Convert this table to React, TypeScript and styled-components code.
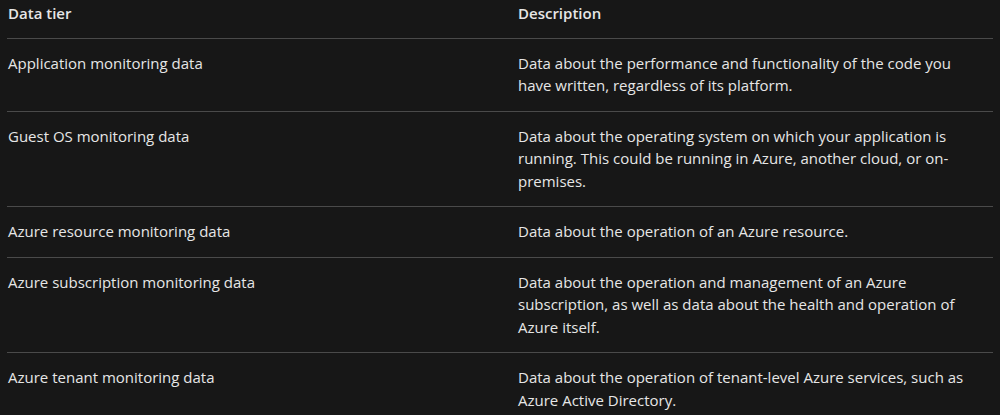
import styled, { createGlobalStyle } from 'styled-components';

const GlobalStyle = createGlobalStyle`
  html, body {
    margin: 0;
    background: #171717;
  }
`;

interface Tier {
  name: string;
  description: string;
}

const tiers: Tier[] = [
  {
    name: 'Application monitoring data',
    description: 'Data about the performance and functionality of the code you have written, regardless of its platform.',
  },
  {
    name: 'Guest OS monitoring data',
    description: 'Data about the operating system on which your application is running. This could be running in Azure, another cloud, or on-premises.',
  },
  {
    name: 'Azure resource monitoring data',
    description: 'Data about the operation of an Azure resource.',
  },
  {
    name: 'Azure subscription monitoring data',
    description: 'Data about the operation and management of an Azure subscription, as well as data about the health and operation of Azure itself.',
  },
  {
    name: 'Azure tenant monitoring data',
    description: 'Data about the operation of tenant-level Azure services, such as Azure Active Directory.',
  },
];

export default function App() {
  return (
    <Page>
      <GlobalStyle />
      <Table>
        <thead>
          <tr>
            <HeadCell>Data tier</HeadCell>
            <HeadCell>Description</HeadCell>
          </tr>
        </thead>
        <tbody>
          {tiers.map((tier) => (
            <Row key={tier.name}>
              <Cell>{tier.name}</Cell>
              <Cell>{tier.description}</Cell>
            </Row>
          ))}
        </tbody>
      </Table>
    </Page>
  );
}

const Page = styled.div`
  width: 1000px;
  height: 415px;
  overflow: hidden;
  background: #171717;
  padding: 0 7px;
  box-sizing: border-box;
  font-family: 'Segoe UI', 'Open Sans', sans-serif;
  font-size: 15px;
  line-height: 22.5px;
  color: #e6e6e6;
`;

const Table = styled.table`
  width: 986px;
  border-collapse: collapse;
  table-layout: fixed;
`;

const HeadCell = styled.th`
  text-align: left;
  font-weight: 600;
  padding: 2px 16px 13px 0;
  border-bottom: 1px solid #4a4a4a;
  &:first-child {
    width: 494px;
    padding-left: 1px;
  }
`;

const Row = styled.tr`
  border-bottom: 1px solid #4a4a4a;
`;

const Cell = styled.td`
  vertical-align: top;
  padding: 13px 16px 14px 0;
  &:first-child {
    padding-left: 1px;
  }
`;
